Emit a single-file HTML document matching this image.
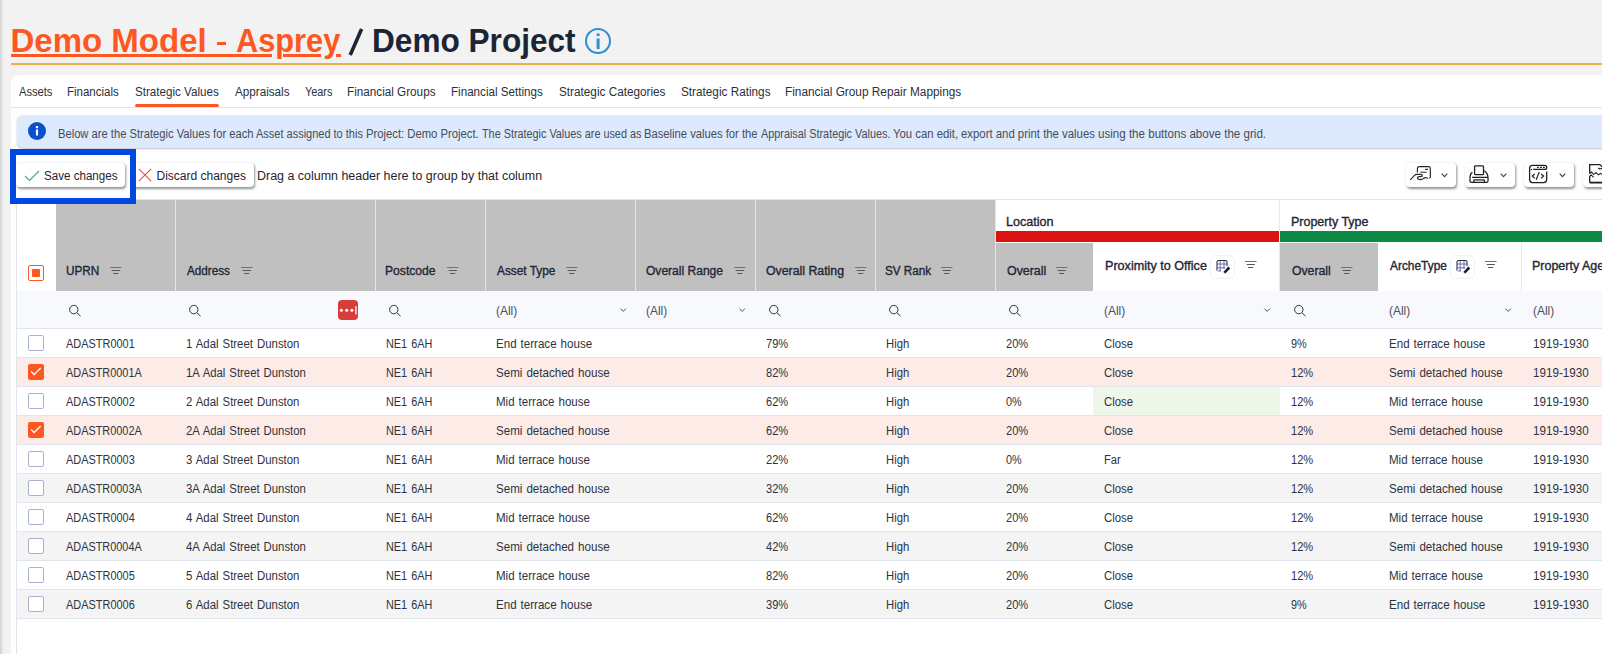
<!DOCTYPE html><html><head><meta charset="utf-8"><title>Strategic Values</title><style>
html,body{margin:0;padding:0;}
body{width:1602px;height:654px;overflow:hidden;background:#f2f2f2;position:relative;font-family:"Liberation Sans",sans-serif;}
.t{position:absolute;white-space:nowrap;transform-origin:0 0;}
.b{position:absolute;box-sizing:border-box;}
svg{position:absolute;overflow:visible;}
</style></head><body>
<div class="b" style="left:0px;top:0px;width:4px;height:654px;background:linear-gradient(to right,#cfcfcf,#e2e2e2 45%,#f2f2f2);"></div>
<div class="t" style="left:10.50px;top:24.00px;font-size:33px;line-height:33px;font-weight:700;color:#ff5722;">Demo Model</div>
<div class="b" style="left:217px;top:41.5px;width:9px;height:3.5px;background:#ff5722;"></div>
<div class="t" style="left:235.67px;top:24.00px;font-size:33px;line-height:33px;font-weight:700;color:#ff5722;transform:scaleX(0.9315);">Asprey</div>
<div class="b" style="left:11px;top:54px;width:261px;height:3px;background:#ff5722;"></div>
<div class="b" style="left:283px;top:54px;width:38px;height:3px;background:#ff5722;"></div>
<div class="b" style="left:336px;top:54px;width:4.5px;height:3px;background:#ff5722;"></div>
<svg style="left:345px;top:27px" width="22" height="30" viewBox="0 0 22 30"><path d="M16.6 2 L5.2 28" stroke="#1c2536" stroke-width="3.6"/></svg>
<div class="t" style="left:372.09px;top:24.00px;font-size:33px;line-height:33px;font-weight:700;color:#1c2536;transform:scaleX(0.9573);">Demo Project</div>
<svg style="left:585px;top:28px" width="26" height="26" viewBox="0 0 26 26"><circle cx="13" cy="13" r="12" fill="none" stroke="#2a8fd4" stroke-width="2"/><rect x="11.6" y="5.5" width="3" height="2.6" fill="#2a8fd4"/><rect x="11.6" y="10.5" width="3" height="10.5" fill="#2a8fd4"/></svg>
<div class="b" style="left:11px;top:63px;width:1591px;height:2px;background:#f0ad4e;"></div>
<div class="b" style="left:11px;top:75px;width:1600px;height:600px;background:#fff;border-radius:7px 0 0 0;"></div>
<div class="b" style="left:11px;top:107px;width:1591px;height:1px;background:#e1e5ec;"></div>
<div class="t" style="left:19.30px;top:86.00px;font-size:12.5px;line-height:12.5px;font-weight:400;color:#2b2f3a;transform:scaleX(0.8892);">Assets</div>
<div class="t" style="left:67.48px;top:86.00px;font-size:12.5px;line-height:12.5px;font-weight:400;color:#2b2f3a;transform:scaleX(0.9200);">Financials</div>
<div class="t" style="left:134.57px;top:86.00px;font-size:12.5px;line-height:12.5px;font-weight:400;color:#2b2f3a;transform:scaleX(0.9292);">Strategic Values</div>
<div class="t" style="left:234.70px;top:86.00px;font-size:12.5px;line-height:12.5px;font-weight:400;color:#2b2f3a;transform:scaleX(0.9345);">Appraisals</div>
<div class="t" style="left:305.00px;top:86.00px;font-size:12.5px;line-height:12.5px;font-weight:400;color:#2b2f3a;transform:scaleX(0.8710);">Years</div>
<div class="t" style="left:347.26px;top:86.00px;font-size:12.5px;line-height:12.5px;font-weight:400;color:#2b2f3a;transform:scaleX(0.9366);">Financial Groups</div>
<div class="t" style="left:451.37px;top:86.00px;font-size:12.5px;line-height:12.5px;font-weight:400;color:#2b2f3a;transform:scaleX(0.9296);">Financial Settings</div>
<div class="t" style="left:558.76px;top:86.00px;font-size:12.5px;line-height:12.5px;font-weight:400;color:#2b2f3a;transform:scaleX(0.9402);">Strategic Categories</div>
<div class="t" style="left:680.76px;top:86.00px;font-size:12.5px;line-height:12.5px;font-weight:400;color:#2b2f3a;transform:scaleX(0.9404);">Strategic Ratings</div>
<div class="t" style="left:785.35px;top:86.00px;font-size:12.5px;line-height:12.5px;font-weight:400;color:#2b2f3a;transform:scaleX(0.9465);">Financial Group Repair Mappings</div>
<div class="b" style="left:135px;top:104px;width:84px;height:3px;background:#ff5722;border-radius:2px;"></div>
<div class="b" style="left:17px;top:115px;width:1600px;height:33px;background:#dde9fc;border-radius:6px 0 0 6px;box-shadow:0 1px 2px rgba(0,0,0,.25);"></div>
<svg style="left:28px;top:122px" width="18" height="18" viewBox="0 0 18 18"><circle cx="9" cy="9" r="9" fill="#0a4fcf"/><rect x="7.9" y="4" width="2.2" height="2.2" fill="#fff"/><rect x="7.9" y="7.5" width="2.2" height="6" fill="#fff"/></svg>
<div class="t" style="left:57.57px;top:128px;font-size:12px;line-height:12px;color:#474c58;transform:scaleX(0.9314)">Below are the Strategic Values for each</div>
<div class="t" style="left:256.10px;top:128px;font-size:12px;line-height:12px;color:#474c58;transform:scaleX(0.9156)">Asset assigned to this</div>
<div class="t" style="left:365.96px;top:128px;font-size:12px;line-height:12px;color:#474c58;transform:scaleX(0.9383)">Project: Demo Project.</div>
<div class="t" style="left:481.70px;top:128px;font-size:12px;line-height:12px;color:#474c58;transform:scaleX(0.9026)">The Strategic Values are used as</div>
<div class="t" style="left:643.96px;top:128px;font-size:12px;line-height:12px;color:#474c58;transform:scaleX(0.9353)">Baseline values for the</div>
<div class="t" style="left:760.60px;top:128px;font-size:12px;line-height:12px;color:#474c58;transform:scaleX(0.9039)">Appraisal Strategic Values.</div>
<div class="t" style="left:893.00px;top:128px;font-size:12px;line-height:12px;color:#474c58;transform:scaleX(0.9439)">You can edit,</div>
<div class="t" style="left:961.20px;top:128px;font-size:12px;line-height:12px;color:#474c58;transform:scaleX(0.9471)">export and print the values</div>
<div class="t" style="left:1098.23px;top:128.00px;font-size:12px;line-height:12px;font-weight:400;color:#474c58;transform:scaleX(0.9651);">using the buttons above the grid.</div>
<div class="b" style="left:16px;top:163px;width:109px;height:24px;background:#fff;border-radius:4px;box-shadow:1px 1.5px 2.5px rgba(0,0,0,.42);"></div>
<svg style="left:24px;top:169px" width="16" height="13" viewBox="0 0 16 13"><path d="M1 7 L5.5 11.5 L15 2" fill="none" stroke="#3ab46a" stroke-width="1.2"/></svg>
<div class="t" style="left:43.53px;top:170.00px;font-size:12px;line-height:12px;font-weight:400;color:#1f2430;transform:scaleX(0.9667);">Save changes</div>
<div class="b" style="left:131px;top:163px;width:123px;height:24px;background:#fff;border-radius:4px;box-shadow:1px 1.5px 2.5px rgba(0,0,0,.42);"></div>
<svg style="left:138px;top:168px" width="14" height="14" viewBox="0 0 14 14"><path d="M0.8 0.8 L13.2 13.2 M13.2 0.8 L0.8 13.2" fill="none" stroke="#e84a4a" stroke-width="1.05"/></svg>
<div class="t" style="left:156.50px;top:170.00px;font-size:12px;line-height:12px;font-weight:400;color:#1f2430;">Discard changes</div>
<div class="t" style="left:256.86px;top:170.00px;font-size:12px;line-height:12px;font-weight:400;color:#1f2430;transform:scaleX(1.0372);">Drag a column header here to group by that column</div>
<div class="b" style="left:1406px;top:163px;width:50px;height:24px;background:#fff;border-radius:4px;box-shadow:1px 1.5px 2.5px rgba(0,0,0,.42);"></div>
<div class="b" style="left:1465px;top:163px;width:50px;height:24px;background:#fff;border-radius:4px;box-shadow:1px 1.5px 2.5px rgba(0,0,0,.42);"></div>
<div class="b" style="left:1524px;top:163px;width:50px;height:24px;background:#fff;border-radius:4px;box-shadow:1px 1.5px 2.5px rgba(0,0,0,.42);"></div>
<div class="b" style="left:1583px;top:163px;width:50px;height:24px;background:#fff;border-radius:4px;box-shadow:1px 1.5px 2.5px rgba(0,0,0,.42);"></div>
<svg style="left:1404px;top:160px" width="56" height="30" viewBox="0 0 56 30"><path d="M13.4 12.6 V8.6 Q13.4 6.6 15.4 6.6 H24.5 Q26.3 6.6 26.3 8.4 V17 Q26.3 18.2 25.2 18.2 M21.2 9.4 H23.9 M16.4 12.2 H22.7" fill="none" stroke="#26262c" stroke-width="1.15"/><path d="M6.3 19.8 L10.3 15.6 Q11.4 14.4 13 14.4 H16.8 Q18.3 14.4 18.3 15.6 Q18.3 16.6 16.8 16.6 H15.3 Q13.4 16.6 13.4 18 Q13.6 19.6 16.2 19.6 Q18.4 19.6 19.8 18.3 Q21 17.3 22.2 17.8 Q23.2 18.3 24.2 18.2" fill="none" stroke="#26262c" stroke-width="1.15"/></svg>
<svg style="left:1441px;top:173px" width="8" height="5" viewBox="0 0 8 5"><path d="M0.7 0.7 L3.5 3.6 L6.3 0.7" fill="none" stroke="#3b4254" stroke-width="1.1"/></svg>
<svg style="left:1463px;top:160px" width="56" height="30" viewBox="0 0 56 30"><rect x="11.6" y="5.8" width="8.9" height="8.9" rx="0.8" fill="none" stroke="#222228" stroke-width="1.3"/><path d="M9.4 12.2 Q7 13.8 7 17.5 V21 Q7 22.4 8.4 22.4 H23.6 Q25 22.4 25 21 V17.5 Q25 13.5 21.2 10.7 M10.8 22.3 V20.6 Q10.8 19.8 11.6 19.8 H20.6 Q21.4 19.8 21.4 20.6 V22.3 M9.2 17.3 H25.2" fill="none" stroke="#222228" stroke-width="1.25"/></svg>
<svg style="left:1500px;top:173px" width="8" height="5" viewBox="0 0 8 5"><path d="M0.7 0.7 L3.5 3.6 L6.3 0.7" fill="none" stroke="#3b4254" stroke-width="1.1"/></svg>
<svg style="left:1518px;top:158px" width="84" height="34" viewBox="0 0 84 34"><path d="M28.7 13.5 V21.6 Q28.7 24.6 25.7 24.6 H14.5 Q11.6 24.6 11.6 21.6 V10.4 Q11.6 7.4 14.5 7.4 H26.7 Q28.7 7.4 28.7 9.4 Q28.7 11.4 26.7 11.4 H15.2" fill="none" stroke="#1e1e24" stroke-width="1.25"/><circle cx="13.5" cy="11.4" r="0.75" fill="#1e1e24"/><path d="M19 9.4 H20.8 M22 9.4 H23.9 M25 9.4 H26.8" stroke="#1e1e24" stroke-width="1.1"/><path d="M16.8 16 L14.3 18.1 L16.8 20.2 M23 16 L25.6 18.1 L23 20.2 M21.3 13.9 L18.2 21.8" fill="none" stroke="#1e1e24" stroke-width="1.2"/></svg>
<svg style="left:1559px;top:173px" width="8" height="5" viewBox="0 0 8 5"><path d="M0.7 0.7 L3.5 3.6 L6.3 0.7" fill="none" stroke="#3b4254" stroke-width="1.1"/></svg>
<svg style="left:1518px;top:158px" width="84" height="34" viewBox="0 0 84 34"><path d="M71.7 15.6 V6.6 H81.8 L84.5 9 M71.7 18 V24.6" fill="none" stroke="#1e1e24" stroke-width="1.3"/><path d="M71.7 24.6 H86" stroke="#1e1e24" stroke-width="1.8"/><path d="M71.7 15.6 L73.5 14 L75.5 16.4 L78 14.8 L80.5 16.9 L82.5 15.4 L84.5 16.6 M71.7 18 L73.2 16.9 L75.6 19.4 M80.3 9.8 Q80.8 11.2 82.5 10.8 Q83.7 10.4 84.7 10.9" fill="none" stroke="#1e1e24" stroke-width="1.1"/></svg>
<div class="b" style="left:16px;top:199px;width:1602px;height:1px;background:#e1e5ec;"></div>
<div class="b" style="left:16px;top:199px;width:1px;height:460px;background:#e1e5ec;"></div>
<div class="b" style="left:17px;top:200px;width:39px;height:91px;background:#fff;"></div>
<div class="b" style="left:28px;top:265px;width:16px;height:16px;border:1.5px solid #ff5722;border-radius:2px;background:#fff;"></div>
<div class="b" style="left:32px;top:269px;width:8px;height:8px;background:#ff5722;border-radius:1px;"></div>
<div class="b" style="left:56px;top:200px;width:119px;height:91px;background:#c0c0c0;"></div>
<div class="b" style="left:175px;top:200px;width:1px;height:91px;background:#e1e5ee;"></div>
<div class="t" style="left:65.92px;top:265.00px;font-size:12px;line-height:12px;font-weight:400;color:#1f2636;transform:scaleX(0.9812);-webkit-text-stroke:0.35px #1f2636;">UPRN</div>
<svg style="left:110px;top:267px" width="12" height="8" viewBox="0 0 12 8"><path d="M0 0.5H11.5" stroke="#6c7280" stroke-width="1" fill="none"/><path d="M1.7 3.5H9.8M3.2 6.5H8.2" stroke="#4f576a" stroke-width="1" fill="none"/></svg>
<div class="b" style="left:176px;top:200px;width:199px;height:91px;background:#c0c0c0;"></div>
<div class="b" style="left:375px;top:200px;width:1px;height:91px;background:#e1e5ee;"></div>
<div class="t" style="left:187.00px;top:265.00px;font-size:12px;line-height:12px;font-weight:400;color:#1f2636;transform:scaleX(0.9727);-webkit-text-stroke:0.35px #1f2636;">Address</div>
<svg style="left:241px;top:267px" width="12" height="8" viewBox="0 0 12 8"><path d="M0 0.5H11.5" stroke="#6c7280" stroke-width="1" fill="none"/><path d="M1.7 3.5H9.8M3.2 6.5H8.2" stroke="#4f576a" stroke-width="1" fill="none"/></svg>
<div class="b" style="left:376px;top:200px;width:109px;height:91px;background:#c0c0c0;"></div>
<div class="b" style="left:485px;top:200px;width:1px;height:91px;background:#e1e5ee;"></div>
<div class="t" style="left:385.49px;top:265.00px;font-size:12px;line-height:12px;font-weight:400;color:#1f2636;transform:scaleX(1.0102);-webkit-text-stroke:0.35px #1f2636;">Postcode</div>
<svg style="left:447px;top:267px" width="12" height="8" viewBox="0 0 12 8"><path d="M0 0.5H11.5" stroke="#6c7280" stroke-width="1" fill="none"/><path d="M1.7 3.5H9.8M3.2 6.5H8.2" stroke="#4f576a" stroke-width="1" fill="none"/></svg>
<div class="b" style="left:486px;top:200px;width:149px;height:91px;background:#c0c0c0;"></div>
<div class="b" style="left:635px;top:200px;width:1px;height:91px;background:#e1e5ee;"></div>
<div class="t" style="left:496.60px;top:265.00px;font-size:12px;line-height:12px;font-weight:400;color:#1f2636;transform:scaleX(0.9864);-webkit-text-stroke:0.35px #1f2636;">Asset Type</div>
<svg style="left:566px;top:267px" width="12" height="8" viewBox="0 0 12 8"><path d="M0 0.5H11.5" stroke="#6c7280" stroke-width="1" fill="none"/><path d="M1.7 3.5H9.8M3.2 6.5H8.2" stroke="#4f576a" stroke-width="1" fill="none"/></svg>
<div class="b" style="left:636px;top:200px;width:119px;height:91px;background:#c0c0c0;"></div>
<div class="b" style="left:755px;top:200px;width:1px;height:91px;background:#e1e5ee;"></div>
<div class="t" style="left:646.40px;top:265.00px;font-size:12px;line-height:12px;font-weight:400;color:#1f2636;transform:scaleX(1.0039);-webkit-text-stroke:0.35px #1f2636;">Overall Range</div>
<svg style="left:734px;top:267px" width="12" height="8" viewBox="0 0 12 8"><path d="M0 0.5H11.5" stroke="#6c7280" stroke-width="1" fill="none"/><path d="M1.7 3.5H9.8M3.2 6.5H8.2" stroke="#4f576a" stroke-width="1" fill="none"/></svg>
<div class="b" style="left:756px;top:200px;width:119px;height:91px;background:#c0c0c0;"></div>
<div class="b" style="left:875px;top:200px;width:1px;height:91px;background:#e1e5ee;"></div>
<div class="t" style="left:766.40px;top:265.00px;font-size:12px;line-height:12px;font-weight:400;color:#1f2636;transform:scaleX(1.0267);-webkit-text-stroke:0.35px #1f2636;">Overall Rating</div>
<svg style="left:855px;top:267px" width="12" height="8" viewBox="0 0 12 8"><path d="M0 0.5H11.5" stroke="#6c7280" stroke-width="1" fill="none"/><path d="M1.7 3.5H9.8M3.2 6.5H8.2" stroke="#4f576a" stroke-width="1" fill="none"/></svg>
<div class="b" style="left:876px;top:200px;width:119px;height:91px;background:#c0c0c0;"></div>
<div class="b" style="left:995px;top:200px;width:1px;height:91px;background:#e1e5ee;"></div>
<div class="t" style="left:885.33px;top:265.00px;font-size:12px;line-height:12px;font-weight:400;color:#1f2636;transform:scaleX(0.9739);-webkit-text-stroke:0.35px #1f2636;">SV Rank</div>
<svg style="left:941px;top:267px" width="12" height="8" viewBox="0 0 12 8"><path d="M0 0.5H11.5" stroke="#6c7280" stroke-width="1" fill="none"/><path d="M1.7 3.5H9.8M3.2 6.5H8.2" stroke="#4f576a" stroke-width="1" fill="none"/></svg>
<div class="b" style="left:996px;top:200px;width:283px;height:43px;background:#fff;"></div>
<div class="t" style="left:1005.55px;top:216.20px;font-size:12px;line-height:12px;font-weight:400;color:#1f2636;transform:scaleX(1.0477);-webkit-text-stroke:0.35px #1f2636;">Location</div>
<div class="b" style="left:996px;top:231px;width:283px;height:11px;background:#dc1313;"></div>
<div class="b" style="left:1279px;top:200px;width:1px;height:91px;background:#e6e9ef;"></div>
<div class="b" style="left:996px;top:243px;width:97px;height:48px;background:#c0c0c0;"></div>
<div class="t" style="left:1006.60px;top:265.00px;font-size:12px;line-height:12px;font-weight:400;color:#1f2636;transform:scaleX(1.0324);-webkit-text-stroke:0.35px #1f2636;">Overall</div>
<svg style="left:1056px;top:267px" width="12" height="8" viewBox="0 0 12 8"><path d="M0 0.5H11.5" stroke="#6c7280" stroke-width="1" fill="none"/><path d="M1.7 3.5H9.8M3.2 6.5H8.2" stroke="#4f576a" stroke-width="1" fill="none"/></svg>
<div class="b" style="left:1093px;top:243px;width:186px;height:48px;background:#fff;"></div>
<div class="t" style="left:1104.55px;top:260.00px;font-size:12px;line-height:12px;font-weight:400;color:#1f2636;transform:scaleX(1.0490);-webkit-text-stroke:0.35px #1f2636;">Proximity to Office</div>
<div class="b" style="left:1280px;top:200px;width:400px;height:43px;background:#fff;"></div>
<div class="t" style="left:1290.66px;top:216.20px;font-size:12px;line-height:12px;font-weight:400;color:#1f2636;transform:scaleX(1.0397);-webkit-text-stroke:0.35px #1f2636;">Property Type</div>
<div class="b" style="left:1280px;top:231px;width:400px;height:11px;background:#0d8a43;"></div>
<div class="b" style="left:1280px;top:243px;width:98px;height:48px;background:#c0c0c0;"></div>
<div class="t" style="left:1291.70px;top:265.00px;font-size:12px;line-height:12px;font-weight:400;color:#1f2636;transform:scaleX(1.0189);-webkit-text-stroke:0.35px #1f2636;">Overall</div>
<svg style="left:1341px;top:267px" width="12" height="8" viewBox="0 0 12 8"><path d="M0 0.5H11.5" stroke="#6c7280" stroke-width="1" fill="none"/><path d="M1.7 3.5H9.8M3.2 6.5H8.2" stroke="#4f576a" stroke-width="1" fill="none"/></svg>
<div class="b" style="left:1378px;top:243px;width:143px;height:48px;background:#fff;"></div>
<div class="t" style="left:1389.80px;top:260.00px;font-size:12px;line-height:12px;font-weight:400;color:#1f2636;transform:scaleX(0.9912);-webkit-text-stroke:0.35px #1f2636;">ArcheType</div>
<div class="b" style="left:1521px;top:243px;width:1px;height:48px;background:#e6e9ef;"></div>
<div class="b" style="left:1522px;top:243px;width:200px;height:48px;background:#fff;"></div>
<div class="t" style="left:1532.16px;top:260.00px;font-size:12px;line-height:12px;font-weight:400;color:#1f2636;transform:scaleX(1.0397);-webkit-text-stroke:0.35px #1f2636;">Property Age</div>
<div class="b" style="left:1210px;top:255px;width:25px;height:24px;border-radius:6px;border:1px solid #f0f1f4;"></div>
<svg style="left:1216px;top:259px" width="16" height="16" viewBox="0 0 16 16"><path d="M1 11.5 V3 Q1 1.5 2.5 1.5 H9.5 Q11 1.5 11 3 V7" fill="none" stroke="#2a2e3a" stroke-width="1.1"/><path d="M1 5 H11 M1 8.8 H9 M4.2 2 V12 M8 2 V10 M2 12 H5" stroke="#5b5fa8" stroke-width="0.9" fill="none"/><path d="M7.3 13 L12.3 7.6 L14.3 9.4 L9.3 14.6 Z" fill="#1b2030"/></svg>
<svg style="left:1245px;top:261px" width="12" height="8" viewBox="0 0 12 8"><path d="M0 0.5H11.5" stroke="#6c7280" stroke-width="1" fill="none"/><path d="M1.7 3.5H9.8M3.2 6.5H8.2" stroke="#4f576a" stroke-width="1" fill="none"/></svg>
<div class="b" style="left:1450px;top:255px;width:25px;height:24px;border-radius:6px;border:1px solid #f0f1f4;"></div>
<svg style="left:1456px;top:259px" width="16" height="16" viewBox="0 0 16 16"><path d="M1 11.5 V3 Q1 1.5 2.5 1.5 H9.5 Q11 1.5 11 3 V7" fill="none" stroke="#2a2e3a" stroke-width="1.1"/><path d="M1 5 H11 M1 8.8 H9 M4.2 2 V12 M8 2 V10 M2 12 H5" stroke="#5b5fa8" stroke-width="0.9" fill="none"/><path d="M7.3 13 L12.3 7.6 L14.3 9.4 L9.3 14.6 Z" fill="#1b2030"/></svg>
<svg style="left:1485px;top:261px" width="12" height="8" viewBox="0 0 12 8"><path d="M0 0.5H11.5" stroke="#6c7280" stroke-width="1" fill="none"/><path d="M1.7 3.5H9.8M3.2 6.5H8.2" stroke="#4f576a" stroke-width="1" fill="none"/></svg>
<div class="b" style="left:17px;top:291px;width:1602px;height:37px;background:#f8f9fc;"></div>
<div class="b" style="left:16px;top:328px;width:1602px;height:1px;background:#e1e5ec;"></div>
<svg style="left:69px;top:305px" width="14" height="14" viewBox="0 0 14 14"><circle cx="4.8" cy="4.6" r="4.2" fill="none" stroke="#2d3340" stroke-width="1"/><path d="M7.9 7.7 L11.6 11.2" stroke="#2d3340" stroke-width="1"/></svg>
<svg style="left:189px;top:305px" width="14" height="14" viewBox="0 0 14 14"><circle cx="4.8" cy="4.6" r="4.2" fill="none" stroke="#2d3340" stroke-width="1"/><path d="M7.9 7.7 L11.6 11.2" stroke="#2d3340" stroke-width="1"/></svg>
<svg style="left:389px;top:305px" width="14" height="14" viewBox="0 0 14 14"><circle cx="4.8" cy="4.6" r="4.2" fill="none" stroke="#2d3340" stroke-width="1"/><path d="M7.9 7.7 L11.6 11.2" stroke="#2d3340" stroke-width="1"/></svg>
<svg style="left:769px;top:305px" width="14" height="14" viewBox="0 0 14 14"><circle cx="4.8" cy="4.6" r="4.2" fill="none" stroke="#2d3340" stroke-width="1"/><path d="M7.9 7.7 L11.6 11.2" stroke="#2d3340" stroke-width="1"/></svg>
<svg style="left:889px;top:305px" width="14" height="14" viewBox="0 0 14 14"><circle cx="4.8" cy="4.6" r="4.2" fill="none" stroke="#2d3340" stroke-width="1"/><path d="M7.9 7.7 L11.6 11.2" stroke="#2d3340" stroke-width="1"/></svg>
<svg style="left:1009px;top:305px" width="14" height="14" viewBox="0 0 14 14"><circle cx="4.8" cy="4.6" r="4.2" fill="none" stroke="#2d3340" stroke-width="1"/><path d="M7.9 7.7 L11.6 11.2" stroke="#2d3340" stroke-width="1"/></svg>
<svg style="left:1294px;top:305px" width="14" height="14" viewBox="0 0 14 14"><circle cx="4.8" cy="4.6" r="4.2" fill="none" stroke="#2d3340" stroke-width="1"/><path d="M7.9 7.7 L11.6 11.2" stroke="#2d3340" stroke-width="1"/></svg>
<div class="t" style="left:495.50px;top:305.00px;font-size:12px;line-height:12px;font-weight:400;color:#4a5060;transform:scaleX(0.9950);">(All)</div>
<svg style="left:620px;top:308px" width="8" height="5" viewBox="0 0 8 5"><path d="M0.5 0.6 L3.2 3.4 L5.9 0.6" fill="none" stroke="#3a4050" stroke-width="0.9"/></svg>
<div class="t" style="left:645.50px;top:305.00px;font-size:12px;line-height:12px;font-weight:400;color:#4a5060;transform:scaleX(0.9950);">(All)</div>
<svg style="left:739px;top:308px" width="8" height="5" viewBox="0 0 8 5"><path d="M0.5 0.6 L3.2 3.4 L5.9 0.6" fill="none" stroke="#3a4050" stroke-width="0.9"/></svg>
<div class="t" style="left:1103.51px;top:305.00px;font-size:12px;line-height:12px;font-weight:400;color:#4a5060;transform:scaleX(0.9950);">(All)</div>
<svg style="left:1264px;top:308px" width="8" height="5" viewBox="0 0 8 5"><path d="M0.5 0.6 L3.2 3.4 L5.9 0.6" fill="none" stroke="#3a4050" stroke-width="0.9"/></svg>
<div class="t" style="left:1388.51px;top:305.00px;font-size:12px;line-height:12px;font-weight:400;color:#4a5060;transform:scaleX(0.9950);">(All)</div>
<svg style="left:1505px;top:308px" width="8" height="5" viewBox="0 0 8 5"><path d="M0.5 0.6 L3.2 3.4 L5.9 0.6" fill="none" stroke="#3a4050" stroke-width="0.9"/></svg>
<div class="t" style="left:1532.51px;top:305.00px;font-size:12px;line-height:12px;font-weight:400;color:#4a5060;transform:scaleX(0.9950);">(All)</div>
<div class="b" style="left:337.6px;top:299.6px;width:20.6px;height:20.4px;background:#d93d38;border-radius:4px;"></div>
<svg style="left:337.6px;top:299.6px" width="21" height="20" viewBox="0 0 21 20"><circle cx="3.4" cy="10.3" r="1.5" fill="#fff"/><circle cx="8.7" cy="10.3" r="1.5" fill="#fff"/><circle cx="13.9" cy="10.3" r="1.5" fill="#fff"/><rect x="17.3" y="6.2" width="1.3" height="8.2" fill="#fff"/></svg>
<div class="b" style="left:17px;top:329px;width:1602px;height:28px;background:#fff;"></div>
<div class="b" style="left:16px;top:357px;width:1602px;height:1px;background:#e1e5ec;"></div>
<div class="b" style="left:28px;top:335px;width:16px;height:16px;border:1.5px solid #a9b1cc;border-radius:2px;background:#fff;"></div>
<div class="t" style="left:66.2px;top:338.00px;font-size:12px;line-height:12px;color:#2d3340;transform:scaleX(0.9122);word-spacing:0.00px">ADASTR0001</div>
<div class="t" style="left:186px;top:338.00px;font-size:12px;line-height:12px;color:#2d3340;transform:scaleX(0.9506);word-spacing:0.87px">1 Adal Street Dunston</div>
<div class="t" style="left:386px;top:338.00px;font-size:12px;line-height:12px;color:#2d3340;transform:scaleX(0.9050);word-spacing:1.09px">NE1 6AH</div>
<div class="t" style="left:496px;top:338.00px;font-size:12px;line-height:12px;color:#2d3340;transform:scaleX(0.9640);word-spacing:0.82px">End terrace house</div>
<div class="t" style="left:765.9px;top:338.00px;font-size:12px;line-height:12px;color:#2d3340;transform:scaleX(0.9249);word-spacing:0.00px">79%</div>
<div class="t" style="left:885.9px;top:338.00px;font-size:12px;line-height:12px;color:#2d3340;transform:scaleX(0.9383);word-spacing:0.00px">High</div>
<div class="t" style="left:1005.9px;top:338.00px;font-size:12px;line-height:12px;color:#2d3340;transform:scaleX(0.9249);word-spacing:0.00px">20%</div>
<div class="t" style="left:1104px;top:338.00px;font-size:12px;line-height:12px;color:#2d3340;transform:scaleX(0.9450);word-spacing:0.00px">Close</div>
<div class="t" style="left:1291px;top:338.00px;font-size:12px;line-height:12px;color:#2d3340;transform:scaleX(0.9037);word-spacing:0.00px">9%</div>
<div class="t" style="left:1389px;top:338.00px;font-size:12px;line-height:12px;color:#2d3340;transform:scaleX(0.9640);word-spacing:0.82px">End terrace house</div>
<div class="t" style="left:1533px;top:338.00px;font-size:12px;line-height:12px;color:#2d3340;transform:scaleX(0.9714);word-spacing:0.00px">1919-1930</div>
<div class="b" style="left:17px;top:358px;width:1602px;height:28px;background:#fdebe8;"></div>
<div class="b" style="left:16px;top:386px;width:1602px;height:1px;background:#e1e5ec;"></div>
<div class="b" style="left:28px;top:364px;width:16px;height:16px;background:#ff5722;border-radius:2px;"></div>
<svg style="left:28px;top:364px" width="16" height="16" viewBox="0 0 16 16"><path d="M3.1 7.5 L6.1 10.5 L12.7 4" fill="none" stroke="#fff" stroke-width="1.25"/></svg>
<div class="t" style="left:66.2px;top:367.00px;font-size:12px;line-height:12px;color:#2d3340;transform:scaleX(0.9086);word-spacing:0.00px">ADASTR0001A</div>
<div class="t" style="left:186px;top:367.00px;font-size:12px;line-height:12px;color:#2d3340;transform:scaleX(0.9453);word-spacing:0.90px">1A Adal Street Dunston</div>
<div class="t" style="left:386px;top:367.00px;font-size:12px;line-height:12px;color:#2d3340;transform:scaleX(0.9050);word-spacing:1.09px">NE1 6AH</div>
<div class="t" style="left:496px;top:367.00px;font-size:12px;line-height:12px;color:#2d3340;transform:scaleX(0.9654);word-spacing:0.81px">Semi detached house</div>
<div class="t" style="left:765.9px;top:367.00px;font-size:12px;line-height:12px;color:#2d3340;transform:scaleX(0.9249);word-spacing:0.00px">82%</div>
<div class="t" style="left:885.9px;top:367.00px;font-size:12px;line-height:12px;color:#2d3340;transform:scaleX(0.9383);word-spacing:0.00px">High</div>
<div class="t" style="left:1005.9px;top:367.00px;font-size:12px;line-height:12px;color:#2d3340;transform:scaleX(0.9249);word-spacing:0.00px">20%</div>
<div class="t" style="left:1104px;top:367.00px;font-size:12px;line-height:12px;color:#2d3340;transform:scaleX(0.9450);word-spacing:0.00px">Close</div>
<div class="t" style="left:1291px;top:367.00px;font-size:12px;line-height:12px;color:#2d3340;transform:scaleX(0.9249);word-spacing:0.00px">12%</div>
<div class="t" style="left:1389px;top:367.00px;font-size:12px;line-height:12px;color:#2d3340;transform:scaleX(0.9654);word-spacing:0.81px">Semi detached house</div>
<div class="t" style="left:1533px;top:367.00px;font-size:12px;line-height:12px;color:#2d3340;transform:scaleX(0.9714);word-spacing:0.00px">1919-1930</div>
<div class="b" style="left:17px;top:387px;width:1602px;height:28px;background:#fff;"></div>
<div class="b" style="left:16px;top:415px;width:1602px;height:1px;background:#e1e5ec;"></div>
<div class="b" style="left:1093px;top:387px;width:187px;height:28px;background:#eff6ea;"></div>
<div class="b" style="left:28px;top:393px;width:16px;height:16px;border:1.5px solid #a9b1cc;border-radius:2px;background:#fff;"></div>
<div class="t" style="left:66.2px;top:396.00px;font-size:12px;line-height:12px;color:#2d3340;transform:scaleX(0.9122);word-spacing:0.00px">ADASTR0002</div>
<div class="t" style="left:186px;top:396.00px;font-size:12px;line-height:12px;color:#2d3340;transform:scaleX(0.9506);word-spacing:0.87px">2 Adal Street Dunston</div>
<div class="t" style="left:386px;top:396.00px;font-size:12px;line-height:12px;color:#2d3340;transform:scaleX(0.9050);word-spacing:1.09px">NE1 6AH</div>
<div class="t" style="left:496px;top:396.00px;font-size:12px;line-height:12px;color:#2d3340;transform:scaleX(0.9616);word-spacing:0.83px">Mid terrace house</div>
<div class="t" style="left:765.9px;top:396.00px;font-size:12px;line-height:12px;color:#2d3340;transform:scaleX(0.9249);word-spacing:0.00px">62%</div>
<div class="t" style="left:885.9px;top:396.00px;font-size:12px;line-height:12px;color:#2d3340;transform:scaleX(0.9383);word-spacing:0.00px">High</div>
<div class="t" style="left:1005.9px;top:396.00px;font-size:12px;line-height:12px;color:#2d3340;transform:scaleX(0.9037);word-spacing:0.00px">0%</div>
<div class="t" style="left:1104px;top:396.00px;font-size:12px;line-height:12px;color:#2d3340;transform:scaleX(0.9450);word-spacing:0.00px">Close</div>
<div class="t" style="left:1291px;top:396.00px;font-size:12px;line-height:12px;color:#2d3340;transform:scaleX(0.9249);word-spacing:0.00px">12%</div>
<div class="t" style="left:1389px;top:396.00px;font-size:12px;line-height:12px;color:#2d3340;transform:scaleX(0.9616);word-spacing:0.83px">Mid terrace house</div>
<div class="t" style="left:1533px;top:396.00px;font-size:12px;line-height:12px;color:#2d3340;transform:scaleX(0.9714);word-spacing:0.00px">1919-1930</div>
<div class="b" style="left:17px;top:416px;width:1602px;height:28px;background:#fdebe8;"></div>
<div class="b" style="left:16px;top:444px;width:1602px;height:1px;background:#e1e5ec;"></div>
<div class="b" style="left:28px;top:422px;width:16px;height:16px;background:#ff5722;border-radius:2px;"></div>
<svg style="left:28px;top:422px" width="16" height="16" viewBox="0 0 16 16"><path d="M3.1 7.5 L6.1 10.5 L12.7 4" fill="none" stroke="#fff" stroke-width="1.25"/></svg>
<div class="t" style="left:66.2px;top:425.00px;font-size:12px;line-height:12px;color:#2d3340;transform:scaleX(0.9086);word-spacing:0.00px">ADASTR0002A</div>
<div class="t" style="left:186px;top:425.00px;font-size:12px;line-height:12px;color:#2d3340;transform:scaleX(0.9453);word-spacing:0.90px">2A Adal Street Dunston</div>
<div class="t" style="left:386px;top:425.00px;font-size:12px;line-height:12px;color:#2d3340;transform:scaleX(0.9050);word-spacing:1.09px">NE1 6AH</div>
<div class="t" style="left:496px;top:425.00px;font-size:12px;line-height:12px;color:#2d3340;transform:scaleX(0.9654);word-spacing:0.81px">Semi detached house</div>
<div class="t" style="left:765.9px;top:425.00px;font-size:12px;line-height:12px;color:#2d3340;transform:scaleX(0.9249);word-spacing:0.00px">62%</div>
<div class="t" style="left:885.9px;top:425.00px;font-size:12px;line-height:12px;color:#2d3340;transform:scaleX(0.9383);word-spacing:0.00px">High</div>
<div class="t" style="left:1005.9px;top:425.00px;font-size:12px;line-height:12px;color:#2d3340;transform:scaleX(0.9249);word-spacing:0.00px">20%</div>
<div class="t" style="left:1104px;top:425.00px;font-size:12px;line-height:12px;color:#2d3340;transform:scaleX(0.9450);word-spacing:0.00px">Close</div>
<div class="t" style="left:1291px;top:425.00px;font-size:12px;line-height:12px;color:#2d3340;transform:scaleX(0.9249);word-spacing:0.00px">12%</div>
<div class="t" style="left:1389px;top:425.00px;font-size:12px;line-height:12px;color:#2d3340;transform:scaleX(0.9654);word-spacing:0.81px">Semi detached house</div>
<div class="t" style="left:1533px;top:425.00px;font-size:12px;line-height:12px;color:#2d3340;transform:scaleX(0.9714);word-spacing:0.00px">1919-1930</div>
<div class="b" style="left:17px;top:445px;width:1602px;height:28px;background:#fff;"></div>
<div class="b" style="left:16px;top:473px;width:1602px;height:1px;background:#e1e5ec;"></div>
<div class="b" style="left:28px;top:451px;width:16px;height:16px;border:1.5px solid #a9b1cc;border-radius:2px;background:#fff;"></div>
<div class="t" style="left:66.2px;top:454.00px;font-size:12px;line-height:12px;color:#2d3340;transform:scaleX(0.9122);word-spacing:0.00px">ADASTR0003</div>
<div class="t" style="left:186px;top:454.00px;font-size:12px;line-height:12px;color:#2d3340;transform:scaleX(0.9506);word-spacing:0.87px">3 Adal Street Dunston</div>
<div class="t" style="left:386px;top:454.00px;font-size:12px;line-height:12px;color:#2d3340;transform:scaleX(0.9050);word-spacing:1.09px">NE1 6AH</div>
<div class="t" style="left:496px;top:454.00px;font-size:12px;line-height:12px;color:#2d3340;transform:scaleX(0.9616);word-spacing:0.83px">Mid terrace house</div>
<div class="t" style="left:765.9px;top:454.00px;font-size:12px;line-height:12px;color:#2d3340;transform:scaleX(0.9249);word-spacing:0.00px">22%</div>
<div class="t" style="left:885.9px;top:454.00px;font-size:12px;line-height:12px;color:#2d3340;transform:scaleX(0.9383);word-spacing:0.00px">High</div>
<div class="t" style="left:1005.9px;top:454.00px;font-size:12px;line-height:12px;color:#2d3340;transform:scaleX(0.9037);word-spacing:0.00px">0%</div>
<div class="t" style="left:1104px;top:454.00px;font-size:12px;line-height:12px;color:#2d3340;transform:scaleX(0.9328);word-spacing:0.00px">Far</div>
<div class="t" style="left:1291px;top:454.00px;font-size:12px;line-height:12px;color:#2d3340;transform:scaleX(0.9249);word-spacing:0.00px">12%</div>
<div class="t" style="left:1389px;top:454.00px;font-size:12px;line-height:12px;color:#2d3340;transform:scaleX(0.9616);word-spacing:0.83px">Mid terrace house</div>
<div class="t" style="left:1533px;top:454.00px;font-size:12px;line-height:12px;color:#2d3340;transform:scaleX(0.9714);word-spacing:0.00px">1919-1930</div>
<div class="b" style="left:17px;top:474px;width:1602px;height:28px;background:#f4f4f4;"></div>
<div class="b" style="left:16px;top:502px;width:1602px;height:1px;background:#e1e5ec;"></div>
<div class="b" style="left:28px;top:480px;width:16px;height:16px;border:1.5px solid #a9b1cc;border-radius:2px;background:#fff;"></div>
<div class="t" style="left:66.2px;top:483.00px;font-size:12px;line-height:12px;color:#2d3340;transform:scaleX(0.9086);word-spacing:0.00px">ADASTR0003A</div>
<div class="t" style="left:186px;top:483.00px;font-size:12px;line-height:12px;color:#2d3340;transform:scaleX(0.9453);word-spacing:0.90px">3A Adal Street Dunston</div>
<div class="t" style="left:386px;top:483.00px;font-size:12px;line-height:12px;color:#2d3340;transform:scaleX(0.9050);word-spacing:1.09px">NE1 6AH</div>
<div class="t" style="left:496px;top:483.00px;font-size:12px;line-height:12px;color:#2d3340;transform:scaleX(0.9654);word-spacing:0.81px">Semi detached house</div>
<div class="t" style="left:765.9px;top:483.00px;font-size:12px;line-height:12px;color:#2d3340;transform:scaleX(0.9249);word-spacing:0.00px">32%</div>
<div class="t" style="left:885.9px;top:483.00px;font-size:12px;line-height:12px;color:#2d3340;transform:scaleX(0.9383);word-spacing:0.00px">High</div>
<div class="t" style="left:1005.9px;top:483.00px;font-size:12px;line-height:12px;color:#2d3340;transform:scaleX(0.9249);word-spacing:0.00px">20%</div>
<div class="t" style="left:1104px;top:483.00px;font-size:12px;line-height:12px;color:#2d3340;transform:scaleX(0.9450);word-spacing:0.00px">Close</div>
<div class="t" style="left:1291px;top:483.00px;font-size:12px;line-height:12px;color:#2d3340;transform:scaleX(0.9249);word-spacing:0.00px">12%</div>
<div class="t" style="left:1389px;top:483.00px;font-size:12px;line-height:12px;color:#2d3340;transform:scaleX(0.9654);word-spacing:0.81px">Semi detached house</div>
<div class="t" style="left:1533px;top:483.00px;font-size:12px;line-height:12px;color:#2d3340;transform:scaleX(0.9714);word-spacing:0.00px">1919-1930</div>
<div class="b" style="left:17px;top:503px;width:1602px;height:28px;background:#fff;"></div>
<div class="b" style="left:16px;top:531px;width:1602px;height:1px;background:#e1e5ec;"></div>
<div class="b" style="left:28px;top:509px;width:16px;height:16px;border:1.5px solid #a9b1cc;border-radius:2px;background:#fff;"></div>
<div class="t" style="left:66.2px;top:512.00px;font-size:12px;line-height:12px;color:#2d3340;transform:scaleX(0.9122);word-spacing:0.00px">ADASTR0004</div>
<div class="t" style="left:186px;top:512.00px;font-size:12px;line-height:12px;color:#2d3340;transform:scaleX(0.9506);word-spacing:0.87px">4 Adal Street Dunston</div>
<div class="t" style="left:386px;top:512.00px;font-size:12px;line-height:12px;color:#2d3340;transform:scaleX(0.9050);word-spacing:1.09px">NE1 6AH</div>
<div class="t" style="left:496px;top:512.00px;font-size:12px;line-height:12px;color:#2d3340;transform:scaleX(0.9616);word-spacing:0.83px">Mid terrace house</div>
<div class="t" style="left:765.9px;top:512.00px;font-size:12px;line-height:12px;color:#2d3340;transform:scaleX(0.9249);word-spacing:0.00px">62%</div>
<div class="t" style="left:885.9px;top:512.00px;font-size:12px;line-height:12px;color:#2d3340;transform:scaleX(0.9383);word-spacing:0.00px">High</div>
<div class="t" style="left:1005.9px;top:512.00px;font-size:12px;line-height:12px;color:#2d3340;transform:scaleX(0.9249);word-spacing:0.00px">20%</div>
<div class="t" style="left:1104px;top:512.00px;font-size:12px;line-height:12px;color:#2d3340;transform:scaleX(0.9450);word-spacing:0.00px">Close</div>
<div class="t" style="left:1291px;top:512.00px;font-size:12px;line-height:12px;color:#2d3340;transform:scaleX(0.9249);word-spacing:0.00px">12%</div>
<div class="t" style="left:1389px;top:512.00px;font-size:12px;line-height:12px;color:#2d3340;transform:scaleX(0.9616);word-spacing:0.83px">Mid terrace house</div>
<div class="t" style="left:1533px;top:512.00px;font-size:12px;line-height:12px;color:#2d3340;transform:scaleX(0.9714);word-spacing:0.00px">1919-1930</div>
<div class="b" style="left:17px;top:532px;width:1602px;height:28px;background:#f4f4f4;"></div>
<div class="b" style="left:16px;top:560px;width:1602px;height:1px;background:#e1e5ec;"></div>
<div class="b" style="left:28px;top:538px;width:16px;height:16px;border:1.5px solid #a9b1cc;border-radius:2px;background:#fff;"></div>
<div class="t" style="left:66.2px;top:541.00px;font-size:12px;line-height:12px;color:#2d3340;transform:scaleX(0.9086);word-spacing:0.00px">ADASTR0004A</div>
<div class="t" style="left:186px;top:541.00px;font-size:12px;line-height:12px;color:#2d3340;transform:scaleX(0.9453);word-spacing:0.90px">4A Adal Street Dunston</div>
<div class="t" style="left:386px;top:541.00px;font-size:12px;line-height:12px;color:#2d3340;transform:scaleX(0.9050);word-spacing:1.09px">NE1 6AH</div>
<div class="t" style="left:496px;top:541.00px;font-size:12px;line-height:12px;color:#2d3340;transform:scaleX(0.9654);word-spacing:0.81px">Semi detached house</div>
<div class="t" style="left:765.9px;top:541.00px;font-size:12px;line-height:12px;color:#2d3340;transform:scaleX(0.9249);word-spacing:0.00px">42%</div>
<div class="t" style="left:885.9px;top:541.00px;font-size:12px;line-height:12px;color:#2d3340;transform:scaleX(0.9383);word-spacing:0.00px">High</div>
<div class="t" style="left:1005.9px;top:541.00px;font-size:12px;line-height:12px;color:#2d3340;transform:scaleX(0.9249);word-spacing:0.00px">20%</div>
<div class="t" style="left:1104px;top:541.00px;font-size:12px;line-height:12px;color:#2d3340;transform:scaleX(0.9450);word-spacing:0.00px">Close</div>
<div class="t" style="left:1291px;top:541.00px;font-size:12px;line-height:12px;color:#2d3340;transform:scaleX(0.9249);word-spacing:0.00px">12%</div>
<div class="t" style="left:1389px;top:541.00px;font-size:12px;line-height:12px;color:#2d3340;transform:scaleX(0.9654);word-spacing:0.81px">Semi detached house</div>
<div class="t" style="left:1533px;top:541.00px;font-size:12px;line-height:12px;color:#2d3340;transform:scaleX(0.9714);word-spacing:0.00px">1919-1930</div>
<div class="b" style="left:17px;top:561px;width:1602px;height:28px;background:#fff;"></div>
<div class="b" style="left:16px;top:589px;width:1602px;height:1px;background:#e1e5ec;"></div>
<div class="b" style="left:28px;top:567px;width:16px;height:16px;border:1.5px solid #a9b1cc;border-radius:2px;background:#fff;"></div>
<div class="t" style="left:66.2px;top:570.00px;font-size:12px;line-height:12px;color:#2d3340;transform:scaleX(0.9122);word-spacing:0.00px">ADASTR0005</div>
<div class="t" style="left:186px;top:570.00px;font-size:12px;line-height:12px;color:#2d3340;transform:scaleX(0.9506);word-spacing:0.87px">5 Adal Street Dunston</div>
<div class="t" style="left:386px;top:570.00px;font-size:12px;line-height:12px;color:#2d3340;transform:scaleX(0.9050);word-spacing:1.09px">NE1 6AH</div>
<div class="t" style="left:496px;top:570.00px;font-size:12px;line-height:12px;color:#2d3340;transform:scaleX(0.9616);word-spacing:0.83px">Mid terrace house</div>
<div class="t" style="left:765.9px;top:570.00px;font-size:12px;line-height:12px;color:#2d3340;transform:scaleX(0.9249);word-spacing:0.00px">82%</div>
<div class="t" style="left:885.9px;top:570.00px;font-size:12px;line-height:12px;color:#2d3340;transform:scaleX(0.9383);word-spacing:0.00px">High</div>
<div class="t" style="left:1005.9px;top:570.00px;font-size:12px;line-height:12px;color:#2d3340;transform:scaleX(0.9249);word-spacing:0.00px">20%</div>
<div class="t" style="left:1104px;top:570.00px;font-size:12px;line-height:12px;color:#2d3340;transform:scaleX(0.9450);word-spacing:0.00px">Close</div>
<div class="t" style="left:1291px;top:570.00px;font-size:12px;line-height:12px;color:#2d3340;transform:scaleX(0.9249);word-spacing:0.00px">12%</div>
<div class="t" style="left:1389px;top:570.00px;font-size:12px;line-height:12px;color:#2d3340;transform:scaleX(0.9616);word-spacing:0.83px">Mid terrace house</div>
<div class="t" style="left:1533px;top:570.00px;font-size:12px;line-height:12px;color:#2d3340;transform:scaleX(0.9714);word-spacing:0.00px">1919-1930</div>
<div class="b" style="left:17px;top:590px;width:1602px;height:28px;background:#f4f4f4;"></div>
<div class="b" style="left:16px;top:618px;width:1602px;height:1px;background:#e1e5ec;"></div>
<div class="b" style="left:28px;top:596px;width:16px;height:16px;border:1.5px solid #a9b1cc;border-radius:2px;background:#fff;"></div>
<div class="t" style="left:66.2px;top:599.00px;font-size:12px;line-height:12px;color:#2d3340;transform:scaleX(0.9122);word-spacing:0.00px">ADASTR0006</div>
<div class="t" style="left:186px;top:599.00px;font-size:12px;line-height:12px;color:#2d3340;transform:scaleX(0.9506);word-spacing:0.87px">6 Adal Street Dunston</div>
<div class="t" style="left:386px;top:599.00px;font-size:12px;line-height:12px;color:#2d3340;transform:scaleX(0.9050);word-spacing:1.09px">NE1 6AH</div>
<div class="t" style="left:496px;top:599.00px;font-size:12px;line-height:12px;color:#2d3340;transform:scaleX(0.9640);word-spacing:0.82px">End terrace house</div>
<div class="t" style="left:765.9px;top:599.00px;font-size:12px;line-height:12px;color:#2d3340;transform:scaleX(0.9249);word-spacing:0.00px">39%</div>
<div class="t" style="left:885.9px;top:599.00px;font-size:12px;line-height:12px;color:#2d3340;transform:scaleX(0.9383);word-spacing:0.00px">High</div>
<div class="t" style="left:1005.9px;top:599.00px;font-size:12px;line-height:12px;color:#2d3340;transform:scaleX(0.9249);word-spacing:0.00px">20%</div>
<div class="t" style="left:1104px;top:599.00px;font-size:12px;line-height:12px;color:#2d3340;transform:scaleX(0.9450);word-spacing:0.00px">Close</div>
<div class="t" style="left:1291px;top:599.00px;font-size:12px;line-height:12px;color:#2d3340;transform:scaleX(0.9037);word-spacing:0.00px">9%</div>
<div class="t" style="left:1389px;top:599.00px;font-size:12px;line-height:12px;color:#2d3340;transform:scaleX(0.9640);word-spacing:0.82px">End terrace house</div>
<div class="t" style="left:1533px;top:599.00px;font-size:12px;line-height:12px;color:#2d3340;transform:scaleX(0.9714);word-spacing:0.00px">1919-1930</div>
<div class="b" style="left:10px;top:149px;width:126px;height:55px;border:6px solid #0048e0;"></div>
</body></html>
